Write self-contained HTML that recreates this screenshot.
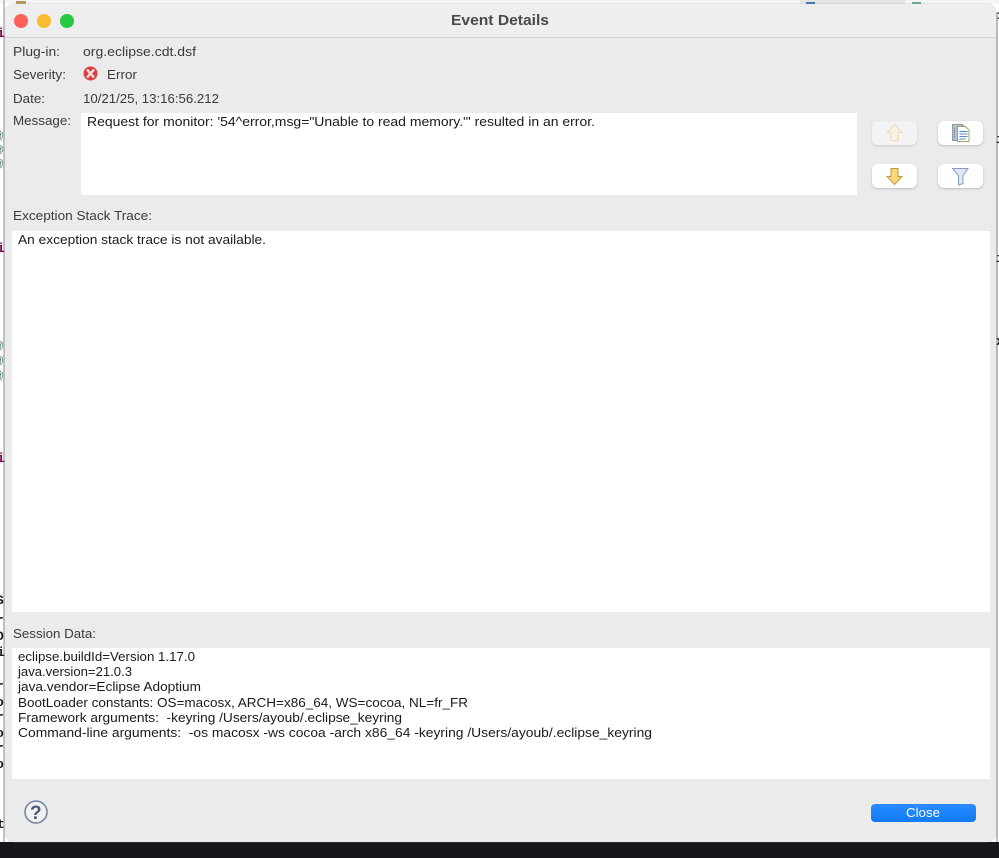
<!DOCTYPE html>
<html><head><meta charset="utf-8"><title>Event Details</title>
<style>
html,body{margin:0;padding:0;width:999px;height:858px;overflow:hidden;background:#fff}
.a{position:absolute}
.box{position:absolute;background:#fff}
svg{position:absolute;left:0;top:0}
text{font-family:"Liberation Sans",sans-serif;font-size:12.8px;fill:#1a1a1a}
.l{fill:#3a3a3a}
.m{font-family:"Liberation Mono",monospace;font-weight:bold;font-size:13px}
</style></head><body>
<div class="a" style="left:0;top:0;width:999px;height:4px;background:#f4f4f4"></div>
<div class="a" style="left:800px;top:0;width:105px;height:4px;background:#e4e4e4"></div>
<div class="a" style="left:806px;top:2px;width:9px;height:3px;background:#3f78b5"></div>
<div class="a" style="left:912px;top:2px;width:9px;height:3px;background:#6fa68a"></div>
<div class="a" style="left:16px;top:1px;width:10px;height:4px;background:#b69a5c"></div>
<div class="a" style="left:3px;top:0;width:2px;height:842px;background:#c4c4c4"></div>
<div class="a" style="left:996px;top:12px;width:2px;height:830px;background:#bdbdbd"></div>
<div class="a" style="left:0;top:842px;width:999px;height:16px;background:#16171b"></div>
<div class="a" style="left:5px;top:4px;width:991px;height:838px;background:#ebebeb;border-radius:9px;overflow:hidden;box-shadow:0 0 1px #999">
  <div class="a" style="left:0;top:0;width:991px;height:33px;background:#eeeeef;border-bottom:1px solid #d2d2d2"></div>
</div>
<div class="a" style="left:14px;top:14px;width:14px;height:14px;border-radius:50%;background:#fc5f57"></div>
<div class="a" style="left:37px;top:14px;width:14px;height:14px;border-radius:50%;background:#fdbb2e"></div>
<div class="a" style="left:60px;top:14px;width:14px;height:14px;border-radius:50%;background:#27c840"></div>

<div class="box" style="left:81px;top:113px;width:776px;height:82px"></div>
<div class="box" style="left:12px;top:231px;width:978px;height:381px"></div>
<div class="box" style="left:12px;top:648px;width:978px;height:131px"></div>

<div class="a" style="left:872px;top:121px;width:45px;height:24px;border-radius:6px;background:#f3f3f3;box-shadow:0 1px 2px #ccc"></div>
<div class="a" style="left:938px;top:121px;width:45px;height:24px;border-radius:6px;background:#fff;box-shadow:0 1px 2px #bbb"></div>
<div class="a" style="left:872px;top:164px;width:45px;height:24px;border-radius:6px;background:#fff;box-shadow:0 1px 2px #bbb"></div>
<div class="a" style="left:938px;top:164px;width:45px;height:24px;border-radius:6px;background:#fff;box-shadow:0 1px 2px #bbb"></div>
<div class="a" style="left:871px;top:804px;width:105px;height:18px;border-radius:4px;background:linear-gradient(#2a8cff,#0f7bfa)"></div>

<svg width="999" height="858" viewBox="0 0 999 858">
  <text x="451" y="25" textLength="98" lengthAdjust="spacingAndGlyphs" style="font-weight:bold;font-size:14.5px;fill:#4a4a4a">Event Details</text>
  <text class="l" x="13" y="56" textLength="47" lengthAdjust="spacingAndGlyphs">Plug-in:</text>
  <text class="l" x="83" y="56" textLength="113" lengthAdjust="spacingAndGlyphs">org.eclipse.cdt.dsf</text>
  <text class="l" x="13" y="79" textLength="53" lengthAdjust="spacingAndGlyphs">Severity:</text>
  <text class="l" x="107" y="79" textLength="30" lengthAdjust="spacingAndGlyphs">Error</text>
  <text class="l" x="13" y="103" textLength="32" lengthAdjust="spacingAndGlyphs">Date:</text>
  <text class="l" x="83" y="103" textLength="136" lengthAdjust="spacingAndGlyphs">10/21/25, 13:16:56.212</text>
  <text class="l" x="13" y="125" textLength="58" lengthAdjust="spacingAndGlyphs">Message:</text>
  <text x="87" y="126" textLength="508" lengthAdjust="spacingAndGlyphs">Request for monitor: '54^error,msg="Unable to read memory."' resulted in an error.</text>
  <text class="l" x="13" y="220" textLength="139" lengthAdjust="spacingAndGlyphs">Exception Stack Trace:</text>
  <text x="18" y="244" textLength="248" lengthAdjust="spacingAndGlyphs">An exception stack trace is not available.</text>
  <text class="l" x="13" y="638" textLength="83" lengthAdjust="spacingAndGlyphs">Session Data:</text>
  <text x="18" y="661" textLength="177" lengthAdjust="spacingAndGlyphs">eclipse.buildId=Version 1.17.0</text>
  <text x="18" y="676" textLength="114" lengthAdjust="spacingAndGlyphs">java.version=21.0.3</text>
  <text x="18" y="691" textLength="183" lengthAdjust="spacingAndGlyphs">java.vendor=Eclipse Adoptium</text>
  <text x="18" y="707" textLength="450" lengthAdjust="spacingAndGlyphs">BootLoader constants: OS=macosx, ARCH=x86_64, WS=cocoa, NL=fr_FR</text>
  <text x="18" y="722" textLength="384" lengthAdjust="spacingAndGlyphs" xml:space="preserve">Framework arguments:  -keyring /Users/ayoub/.eclipse_keyring</text>
  <text x="18" y="737" textLength="634" lengthAdjust="spacingAndGlyphs" xml:space="preserve">Command-line arguments:  -os macosx -ws cocoa -arch x86_64 -keyring /Users/ayoub/.eclipse_keyring</text>
  <text x="906" y="817" textLength="34" lengthAdjust="spacingAndGlyphs" style="fill:#fff">Close</text>

  <!-- error icon -->
  <circle cx="90.5" cy="73.5" r="7" fill="#d9403f"/>
  <path d="M87 69.500l7 8M94 69.500l-7 8" stroke="#f6e4e4" stroke-width="2.400" fill="none"/>
  <!-- up arrow disabled -->
  <path d="M894.500 124.500l7.500 8h-4v8h-7v-8h-4z" fill="#fbf2e2" stroke="#ecd9ba" stroke-width="1"/>
  <!-- down arrow -->
  <path d="M891 168.500h7v8h4l-7.500 8-7.500-8h4z" fill="#fbd77c" stroke="#c09a3e" stroke-width="1"/>
  <!-- copy icon -->
  <path d="M952.500 124.500h10l3 3v13h-13z" fill="#b3c1cf" stroke="#8d99a5"/>
  <path d="M957.500 126.500h8l3.500 3.500v11.500h-11.500z" fill="#fff" stroke="#a99c72"/>
  <path d="M959.500 131.500h8M959.500 134h8M959.500 136.500h8M959.500 139h6" stroke="#4f88c6" stroke-width="1"/>
  <path d="M954.500 128v10" stroke="#5f7590" stroke-width="1" stroke-dasharray="1 1"/>
  <!-- filter icon -->
  <path d="M952.500 168.500h15.500l-5 7v8l-4.500 1.500v-9.500z" fill="#dbe8f8" stroke="#8a9fbf" stroke-width="1"/>
  <!-- help icon -->
  <circle cx="36" cy="812" r="11" fill="#f1f1f1" stroke="#6f83a0" stroke-width="1.500"/>
  <text x="30" y="819" style="font-size:19px;font-weight:bold;fill:#46597a">?</text>

  <!-- background IDE fragments -->
  <g>
    <text class="m" x="-3" y="37" style="fill:#7f0055">i</text>
    <text class="m" x="-3" y="252" style="fill:#7f0055">i</text>
    <text class="m" x="-3" y="462" style="fill:#7f0055">i</text>
    <text x="-7" y="139" style="fill:#4f7f6a;font-size:11px">@</text>
    <text x="-7" y="153" style="fill:#4f7f6a;font-size:11px">@</text>
    <text x="-7" y="167" style="fill:#4f7f6a;font-size:11px">@</text>
    <text x="-7" y="349" style="fill:#4f7f6a;font-size:11px">@</text>
    <text x="-7" y="364" style="fill:#4f7f6a;font-size:11px">@</text>
    <text x="-7" y="379" style="fill:#4f7f6a;font-size:11px">@</text>
    <text class="m" x="-4" y="604">S</text>
    <text class="m" x="-4" y="624">r</text>
    <text class="m" x="-4" y="640">O</text>
    <text class="m" x="-3" y="656">i</text>
    <text class="m" x="-4" y="690">r</text>
    <text class="m" x="-4" y="706">o</text>
    <text class="m" x="-4" y="721">r</text>
    <text class="m" x="-4" y="737">o</text>
    <text class="m" x="-4" y="752">r</text>
    <text class="m" x="-4" y="768">o</text>
    <text class="m" x="-3" y="828">t</text>
    <text class="m" x="997" y="20">&gt;</text>
    <text class="m" x="996" y="143">i</text>
    <text class="m" x="996" y="262">i</text>
    <text class="m" x="996" y="345">x</text>
  </g>
</svg>
</body></html>
